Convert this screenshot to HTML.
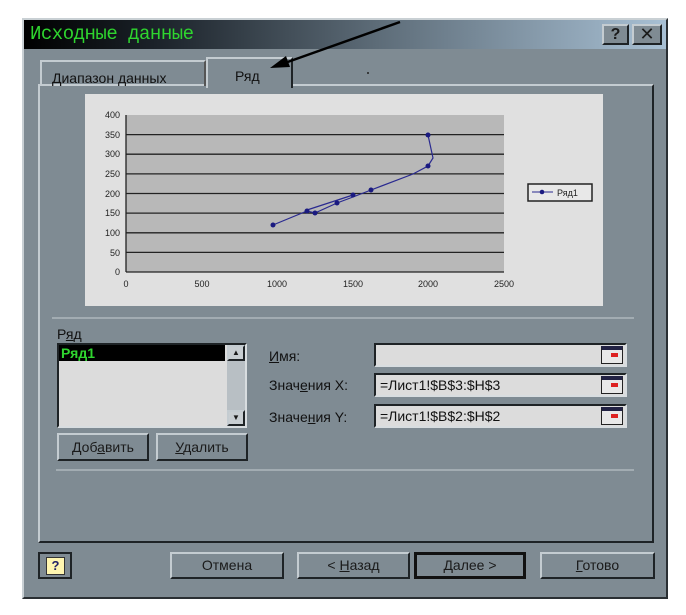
<!DOCTYPE html>
<html><head><meta charset="utf-8"><style>
body{margin:0;width:686px;height:615px;background:#fff;position:relative;overflow:hidden;font-family:"Liberation Sans","DejaVu Sans",sans-serif;font-size:13px;color:#111}
.a{position:absolute;box-sizing:border-box}
.dlg{left:22px;top:18px;width:646px;height:581px;background:#7f8b93;border:2px solid #2a2f33;border-top-color:#c9d0d4;border-left-color:#c9d0d4}
.title{left:24px;top:20px;width:642px;height:29px;background:linear-gradient(90deg,#000 0%,#1a2128 20%,#5d6c78 55%,#a8c0d4 100%)}
.btn{background:#7f8b93;border:2px solid;border-color:#c4ccd1 #1e2326 #1e2326 #c4ccd1;text-align:center;font-size:14px;color:#1a1a1a}
.field{background:#dcdcdc;border:2px solid;border-color:#1e2326 #d8dde0 #d8dde0 #1e2326;font-size:14px;padding-left:4px;line-height:20px}
.ic{position:absolute;box-sizing:border-box;right:2px;top:1px;width:22px;height:18px;background:#e8e8e8;border:1px solid #222;border-top:4px solid #224}
.ic:after{content:"";position:absolute;left:9px;top:3px;width:7px;height:4px;background:#d22}
.lbl{font-size:14px;color:#111}
</style></head><body>
<div class="a dlg"></div>
<div class="a title"></div>
<div class="a" style="left:30px;top:23px;font-family:'Liberation Mono',monospace;font-size:19px;color:#2fd52f;letter-spacing:-0.5px">Исходные данные</div>
<div class="a btn" style="left:602px;top:24px;width:27px;height:21px;font-size:16px;font-weight:bold;line-height:17px">?</div>
<div class="a btn" style="left:632px;top:24px;width:30px;height:21px;font-size:18px;font-weight:bold;line-height:17px">✕</div>
<div class="a" style="left:38px;top:84px;width:616px;height:459px;border:2px solid;border-color:#c4ccd1 #1e2326 #1e2326 #c4ccd1"></div>
<div class="a" style="left:40px;top:60px;width:166px;height:26px;border:2px solid #c4ccd1;border-bottom:none;border-right-color:#555;font-size:14px;padding:8px 0 0 10px">Диапазон данных</div>
<div class="a" style="left:206px;top:57px;width:87px;height:31px;background:#7f8b93;border:2px solid #c4ccd1;border-bottom:none;border-right-color:#1e2326;font-size:14px;padding:9px 0 0 27px">Ряд</div>
<div class="a" style="left:85px;top:94px;width:518px;height:212px;background:#e0e0e0"></div>
<svg class="a" style="left:0;top:0" width="686" height="615">
<rect x="126" y="115" width="378" height="157" fill="#b8b8b8"/>
<g stroke="#222" stroke-width="1.3">
<line x1="126" y1="134.6" x2="504" y2="134.6"/><line x1="126" y1="154.2" x2="504" y2="154.2"/><line x1="126" y1="173.9" x2="504" y2="173.9"/><line x1="126" y1="193.5" x2="504" y2="193.5"/><line x1="126" y1="213.1" x2="504" y2="213.1"/><line x1="126" y1="232.8" x2="504" y2="232.8"/><line x1="126" y1="252.4" x2="504" y2="252.4"/>
<line x1="126" y1="115" x2="126" y2="272"/><line x1="126" y1="272" x2="504" y2="272"/>
</g>
<g font-size="9" fill="#222" text-anchor="end" font-family="Liberation Sans">
<text x="120" y="118">400</text><text x="120" y="138">350</text><text x="120" y="157">300</text><text x="120" y="177">250</text><text x="120" y="197">200</text><text x="120" y="216">150</text><text x="120" y="236">100</text><text x="120" y="256">50</text><text x="120" y="275">0</text>
</g>
<g font-size="9" fill="#222" text-anchor="middle" font-family="Liberation Sans">
<text x="126" y="287">0</text><text x="202" y="287">500</text><text x="277" y="287">1000</text><text x="353" y="287">1500</text><text x="428" y="287">2000</text><text x="504" y="287">2500</text>
</g>
<polyline fill="none" stroke="#2a2a90" stroke-width="1.2" points="273,225 307,211 315,213 337,203 353,197 371,190 413,174 428,166 433,158 428,135"/>
<polyline fill="none" stroke="#2a2a90" stroke-width="1.2" points="307,210 353,195"/>
<g fill="#1a1a80"><circle cx="273" cy="225" r="2.5"/><circle cx="307" cy="211" r="2.5"/><circle cx="315" cy="213" r="2.5"/><circle cx="337" cy="203" r="2.5"/><circle cx="353" cy="195" r="2.5"/><circle cx="371" cy="190" r="2.5"/><circle cx="428" cy="166" r="2.5"/><circle cx="428" cy="135" r="2.5"/></g>
<rect x="528" y="184" width="64" height="17" fill="#e8e8e8" stroke="#222" stroke-width="1.5"/>
<line x1="532" y1="192" x2="553" y2="192" stroke="#2a2a90"/><circle cx="542" cy="192" r="2.3" fill="#1a1a80"/>
<text x="557" y="196" font-size="9" fill="#222" font-family="Liberation Sans">Ряд1</text>
<line x1="52" y1="318" x2="634" y2="318" stroke="#c4ccd1"/>
<line x1="56" y1="470" x2="634" y2="470" stroke="#c4ccd1"/>
<line x1="400" y1="22" x2="282" y2="64" stroke="#000" stroke-width="2.5"/>
<polygon points="270,68 286,56 290,67" fill="#000"/>
<circle cx="368" cy="73" r="1" fill="#222"/>
</svg>
<div class="a lbl" style="left:57px;top:326px">Р<u>я</u>д</div>
<div class="a" style="left:57px;top:343px;width:190px;height:85px;background:#dcdcdc;border:2px solid;border-color:#1e2326 #d8dde0 #d8dde0 #1e2326"></div>
<div class="a" style="left:59px;top:345px;width:166px;height:16px;background:#000;color:#2fd52f;font-size:14px;font-weight:bold;line-height:16px;padding-left:2px">Ряд1</div>
<div class="a" style="left:227px;top:345px;width:18px;height:81px;background:#b8bfc4"></div>
<div class="a btn" style="left:227px;top:345px;width:18px;height:16px;font-size:8px;line-height:12px;background:#c8ced2">▲</div>
<div class="a btn" style="left:227px;top:410px;width:18px;height:16px;font-size:8px;line-height:12px;background:#c8ced2">▼</div>
<div class="a btn" style="left:57px;top:433px;width:92px;height:28px;line-height:24px">Доб<u>а</u>вить</div>
<div class="a btn" style="left:156px;top:433px;width:92px;height:28px;line-height:24px"><u>У</u>далить</div>
<div class="a lbl" style="left:269px;top:348px"><u>И</u>мя:</div>
<div class="a lbl" style="left:269px;top:377px">Знач<u>е</u>ния X:</div>
<div class="a lbl" style="left:269px;top:409px">Значе<u>н</u>ия Y:</div>
<div class="a field" style="left:374px;top:343px;width:253px;height:24px"><div class="ic"></div></div>
<div class="a field" style="left:374px;top:373px;width:253px;height:24px">=Лист1!$B$3:$H$3<div class="ic"></div></div>
<div class="a field" style="left:374px;top:404px;width:253px;height:24px">=Лист1!$B$2:$H$2<div class="ic"></div></div>
<div class="a" style="left:38px;top:552px;width:34px;height:27px;border:2px solid #1e2326;background:#7f8b93"><div style="margin:3px 6px;width:17px;height:16px;background:#fff6b0;border:1px solid #333;font-weight:bold;font-size:13px;text-align:center;line-height:15px;color:#226">?</div></div>
<div class="a btn" style="left:170px;top:552px;width:114px;height:27px;line-height:23px">Отмена</div>
<div class="a btn" style="left:297px;top:552px;width:113px;height:27px;line-height:23px">&lt; <u>Н</u>азад</div>
<div class="a btn" style="left:414px;top:552px;width:112px;height:27px;line-height:21px;border:3px solid #111">Далее &gt;</div>
<div class="a btn" style="left:540px;top:552px;width:115px;height:27px;line-height:23px"><u>Г</u>отово</div>
</body></html>
